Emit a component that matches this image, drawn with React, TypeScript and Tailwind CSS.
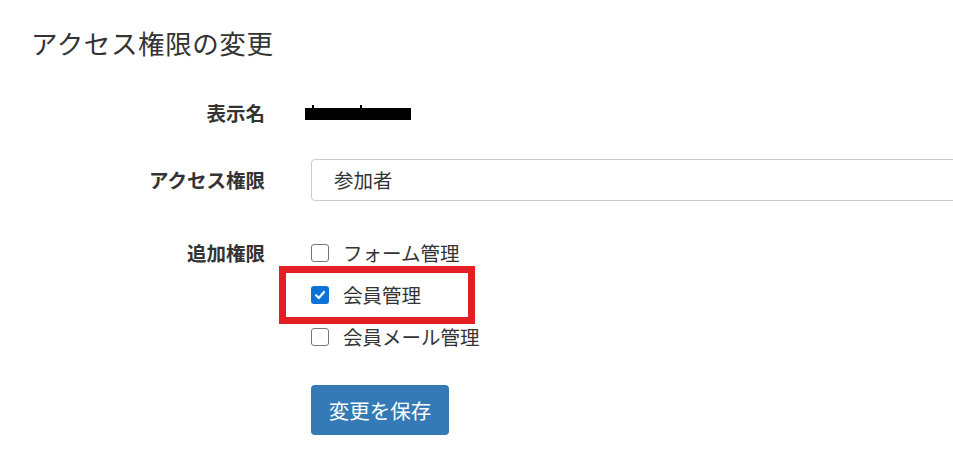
import React from "react";

const font = {
  fontFamily: '"Noto Sans CJK JP", "Noto Sans", "Liberation Sans", sans-serif',
};

function Box({ checked }: { checked?: boolean }) {
  if (checked) {
    return (
      <span className="flex h-[18px] w-[18px] shrink-0 items-center justify-center rounded-[3px] bg-[#0b72d8]">
        <svg width="12" height="12" viewBox="0 0 12 12" fill="none">
          <path d="M2 6.3 L4.8 9 L10 3" stroke="white" strokeWidth="2.2" strokeLinecap="round" strokeLinejoin="round" />
        </svg>
      </span>
    );
  }
  return <span className="block h-[18px] w-[18px] shrink-0 rounded-[3px] border-[1.5px] border-[#767676] bg-white" />;
}

export default function App() {
  const items = [
    { label: "フォーム管理", checked: false },
    { label: "会員管理", checked: true },
    { label: "会員メール管理", checked: false },
  ];
  return (
    <div className="relative h-[471px] w-full overflow-hidden bg-white text-[#333]" style={font}>
      <h1 className="pl-[31px] pt-[28px] text-[26.5px] leading-[30px] font-normal tracking-[0.6px]">アクセス権限の変更</h1>

      <div className="mt-[40px] flex h-[30px] items-center">
        <div className="w-[265px] shrink-0 text-right text-[19.5px] font-bold leading-[30px]">表示名</div>
        <div className="relative ml-[40px] h-[30px] w-[110px]">
          <div className="absolute left-0 top-[10px] h-[12px] w-[106px] bg-black" />
          <div className="absolute left-[7px] top-[7px] h-[3px] w-[2px] bg-black" />
          <div className="absolute left-[55px] top-[7px] h-[3px] w-[2px] bg-black" />
        </div>
      </div>

      <div className="mt-[31px] flex h-[42px] items-center">
        <div className="w-[265px] shrink-0 text-right text-[19.5px] font-bold leading-[30px]">アクセス権限</div>
        <div className="ml-[46px] flex h-[42px] w-[700px] shrink-0 items-center rounded-[4px] border border-[#cccccc] pl-[22px] text-[19.5px]">
          参加者
        </div>
      </div>

      <div className="mt-[31px] flex">
        <div className="h-[42px] w-[265px] shrink-0 text-right text-[19.5px] font-bold leading-[42px]">追加権限</div>
        <div className="ml-[46px] flex flex-col">
          {items.map((it) => (
            <label key={it.label} className="flex h-[42px] items-center gap-[14px] text-[19.5px]">
              <Box checked={it.checked} />
              <span className="leading-[24px]">{it.label}</span>
            </label>
          ))}
        </div>
      </div>

      <div className="ml-[311px] mt-[27px]">
        <button className="flex h-[50px] w-[138px] items-center justify-center rounded-[4px] bg-[#337ab7] text-[20.5px] text-white">
          変更を保存
        </button>
      </div>

      <div className="pointer-events-none absolute left-[279px] top-[266px] h-[58px] w-[196px] border-[7px] border-[#e31e24]" />
    </div>
  );
}
